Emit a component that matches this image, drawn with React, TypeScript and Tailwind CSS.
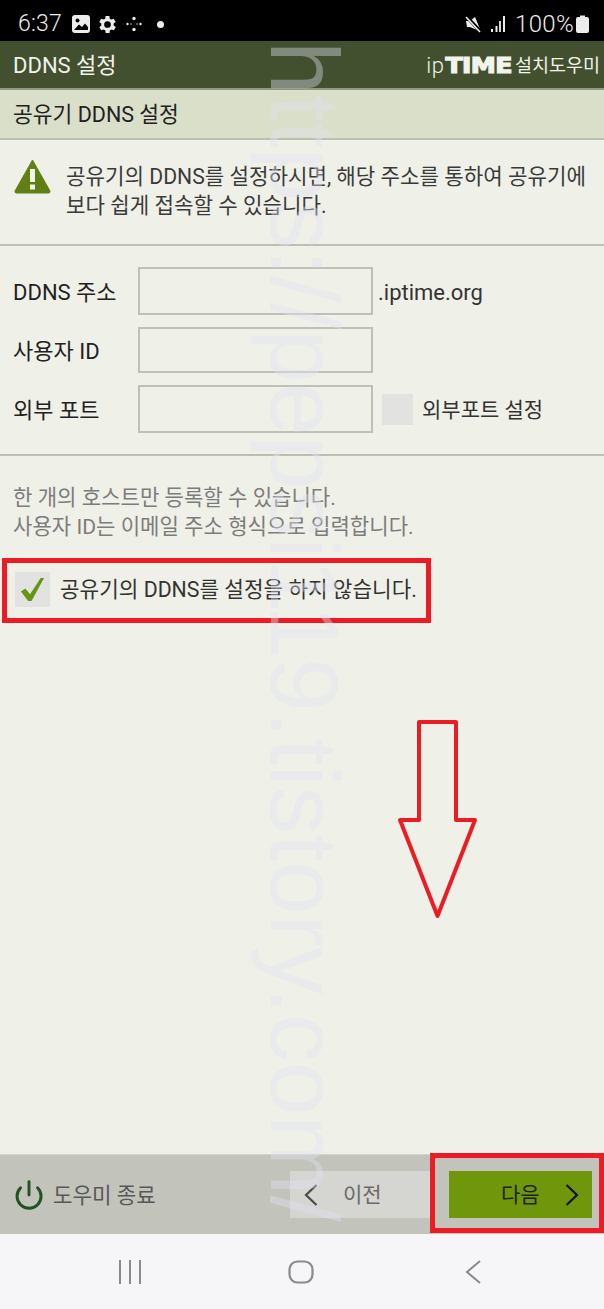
import { Power } from "lucide-react";

const FONT = "font-['Roboto','Noto_Sans_CJK_KR',sans-serif]";

function StatusBar() {
  return (
    <div className="flex h-[41px] shrink-0 items-end justify-between bg-black pb-[2px] pl-[18px] pr-[15px] text-[#ececec]">
      <div className="flex items-center">
        <span className="text-[23px] font-light leading-[30px] tracking-[0.2px]">6:37</span>
        {/* gallery */}
        <svg className="ml-[10px]" width="18" height="18" viewBox="0 0 18 18">
          <rect x="0" y="0" width="18" height="18" rx="3" fill="#ececec" />
          <circle cx="5.5" cy="5.5" r="2" fill="#000" />
          <path d="M2 15 L7 9.5 L10 12 L13 8.5 L16 12 V15 Z" fill="#000" />
        </svg>
        {/* settings */}
        <svg className="ml-[6px]" width="23" height="23" viewBox="0 0 24 24" fill="#ececec">
          <path d="M19.4 13a7.6 7.6 0 0 0 0-2l2.1-1.6-2-3.5-2.5 1a7.6 7.6 0 0 0-1.7-1L15 3.2h-4l-.4 2.7a7.6 7.6 0 0 0-1.700 1l-2.500-1-2 3.500L6.600 11a7.600 7.600 0 0 0 0 2l-2.100 1.600 2 3.500 2.500-1a7.600 7.600 0 0 0 1.700 1l.4 2.700h4l.4-2.700a7.600 7.600 0 0 0 1.700-1l2.500 1 2-3.500zM13 15.500a3.500 3.500 0 1 1 0-7 3.500 3.500 0 0 1 0 7z" transform="translate(-1 0)" />
        </svg>
        {/* dotted cluster */}
        <svg className="ml-[6px]" width="18" height="18" viewBox="0 0 18 18" fill="#ececec">
          <circle cx="9" cy="3.500" r="1.700" />
          <circle cx="9" cy="14.500" r="1.700" />
          <circle cx="2.500" cy="9" r="1.200" />
          <circle cx="15.500" cy="9" r="1.200" />
          <circle cx="6" cy="9" r="0.700" />
          <circle cx="12" cy="9" r="0.700" />
        </svg>
        <span className="ml-[14px] h-[7px] w-[7px] rounded-full bg-[#ececec]" />
      </div>
      <div className="flex items-center">
        {/* muted speaker */}
        <svg width="18" height="18" viewBox="0 0 18 18">
          <path d="M2 6 H6 L11 2 L16 14 L13 15 L6 12 H3 Z" fill="#ececec" />
          <path d="M2 1 L17 17" stroke="#000" strokeWidth="3.500" />
          <path d="M2 2 L16 17" stroke="#ececec" strokeWidth="1.600" />
        </svg>
        <svg className="ml-[9px]" width="15" height="18" viewBox="0 0 15 18" fill="#ececec">
          <rect x="0" y="14" width="2" height="3" />
          <rect x="4.500" y="11" width="2" height="6" />
          <rect x="8" y="6" width="2" height="11" opacity="0.900" />
          <rect x="12" y="1" width="2" height="16" />
        </svg>
        <span className="ml-[9px] text-[24px] font-light leading-[30px] tracking-[0.3px]">100%</span>
        <svg className="ml-[2px]" width="13" height="18" viewBox="0 0 13 18">
          <path d="M4 0.500 H9 V2 H11 Q13 2 13 4 V16 Q13 18 11 18 H2 Q0 18 0 16 V4 Q0 2 2 2 H4 Z" fill="#ececec" />
        </svg>
      </div>
    </div>
  );
}

function TitleBars() {
  return (
    <>
      <div className="flex h-[49px] shrink-0 items-center justify-between border-b-2 border-[#8f9a80] bg-[#42502f] pl-[13px] pr-[4px] pt-[3px] text-[#f2f3ea]">
        <span className="text-[22px] leading-none">DDNS 설정</span>
        <div className="flex items-center leading-none">
          <span className="text-[22px] font-light tracking-[0.500px]">ip</span>
          <span className="ml-[6px] mr-[9px] inline-block origin-center scale-x-[1.2] font-['DejaVu_Sans',sans-serif] text-[21px] font-bold tracking-[-0.500px] [-webkit-text-stroke:1.2px_#f2f3ea]">
            TIME
          </span>
          <span className="text-[18.500px]">설치도우미</span>
        </div>
      </div>
      <div className="flex h-[50px] shrink-0 items-center border-b-2 border-[#bcbfb2] bg-[#d9dfc8] pl-[13px] pt-[2px] text-[21.500px] text-[#222]">
        공유기 DDNS 설정
      </div>
    </>
  );
}

function Notice() {
  return (
    <div className="flex h-[106px] shrink-0 border-b-2 border-[#bcbfb2] pl-[14px] pt-[19px]">
      <svg className="shrink-0" width="37" height="35" viewBox="0 0 37 35">
        <path d="M18.500 1 L36 32 Q36.500 34 34.500 34 H2.500 Q0.500 34 1 32 Z" fill="#608016" stroke="#608016" strokeLinejoin="round" />
        <rect x="16" y="10" width="5" height="13" fill="#f2f3ea" />
        <rect x="16" y="25.500" width="5" height="5" fill="#f2f3ea" />
      </svg>
      <p className="ml-[15px] mt-[3px] text-[21.200px] leading-[29px] text-[#3a3a3a]">
        공유기의 DDNS를 설정하시면, 해당 주소를 통하여 공유기에
        <br />
        보다 쉽게 접속할 수 있습니다.
      </p>
    </div>
  );
}

function Field({ label, children }: { label: string; children?: React.ReactNode }) {
  return (
    <div className="flex items-center">
      <span className="w-[125px] shrink-0 pt-[3px] text-[22px] text-[#222]">{label}</span>
      <div className="h-full w-[235px] shrink-0 border-2 border-[#bfc1b8]" />
      {children}
    </div>
  );
}

function Form() {
  return (
    <div className="grid h-[210px] shrink-0 grid-rows-[48px_46px_48px] content-start gap-y-[12px] border-b-2 border-[#bcbfb2] pl-[13px] pt-[21px]">
      <Field label="DDNS 주소">
        <span className="ml-[5px] pt-[3px] text-[22px] text-[#333]">.iptime.org</span>
      </Field>
      <Field label="사용자 ID" />
      <Field label="외부 포트">
        <span className="ml-[9px] h-[31px] w-[31px] shrink-0 bg-[#e2e2e0]" />
        <span className="ml-[9px] pt-[3px] text-[21px] text-[#333]">외부포트 설정</span>
      </Field>
    </div>
  );
}

function Hints() {
  return (
    <div className="shrink-0 pl-[13px] pt-[27px] text-[21.100px] leading-[29px] text-[#7c7c7c]">
      <p>한 개의 호스트만 등록할 수 있습니다.</p>
      <p>사용자 ID는 이메일 주소 형식으로 입력합니다.</p>
    </div>
  );
}

function SkipOption() {
  return (
    <div className="mt-[31px] flex shrink-0 items-center pl-[15px]">
      <span className="flex h-[35px] w-[35px] items-center justify-center bg-[#e2e2e0]">
        <svg width="25" height="25" viewBox="0 0 26 26">
          <path d="M1 15 L5.500 12 L10.500 18 L21.500 1 L25 1 L12 25 L8.500 25 Z" fill="#659512" />
        </svg>
      </span>
      <span className="ml-[10px] text-[21.300px] text-[#333]">공유기의 DDNS를 설정을 하지 않습니다.</span>
    </div>
  );
}

function Footer() {
  return (
    <div className="flex h-[80px] shrink-0 items-center border-t border-[#d2d3cb] bg-[#c2c3bb] pr-[12px]">
      <Power className="ml-[13px] text-[#24521f]" size={32} strokeWidth={2.200} />
      <span className="ml-[8px] pt-[2px] text-[21.200px] text-[#585858]">도우미 종료</span>
      <div className="ml-auto flex h-[47px] w-[140px] items-center bg-[#d5d5d1]">
        <svg className="ml-[14px]" width="14" height="24" viewBox="0 0 14 24" fill="none" stroke="#4a4a4a" strokeWidth="2.200">
          <path d="M12.500 2 L2 12 L12.500 22" />
        </svg>
        <span className="ml-[25px] pt-[2px] text-[21px] text-[#6a6a6a]">이전</span>
      </div>
      <div className="ml-[19px] flex h-[47px] w-[143px] items-center bg-[#70970c]">
        <span className="ml-[52px] pt-[2px] text-[21px] text-[#1f1f1f]">다음</span>
        <svg className="ml-[25px]" width="14" height="24" viewBox="0 0 14 24" fill="none" stroke="#111" strokeWidth="2.200">
          <path d="M1.500 2 L12 12 L1.500 22" />
        </svg>
      </div>
    </div>
  );
}

function NavBar() {
  return (
    <div className="flex h-[75px] shrink-0 items-start bg-[#f6f6f8] pt-[26px]">
      <svg className="ml-[118px]" width="24" height="24" viewBox="0 0 24 24" stroke="#8a8a8a" strokeWidth="2">
        <path d="M2 0 V24 M12 0 V24 M22 0 V24" />
      </svg>
      <svg className="ml-[146px]" width="26" height="24" viewBox="0 0 26 24" fill="none" stroke="#8a8a8a" strokeWidth="2.200">
        <rect x="1.500" y="1.500" width="23" height="21" rx="8" />
      </svg>
      <svg className="ml-[151px]" width="16" height="24" viewBox="0 0 16 24" fill="none" stroke="#8a8a8a" strokeWidth="2">
        <path d="M15 1 L2 12 L15 23" />
      </svg>
    </div>
  );
}

export default function App() {
  return (
    <div className={`relative flex h-[1309px] w-[604px] flex-col overflow-hidden bg-[#eff0e7] ${FONT}`}>
      <StatusBar />
      <TitleBars />
      <Notice />
      <Form />
      <Hints />
      <SkipOption />
      <div className="flex-1" />
      <Footer />
      <NavBar />

      {/* annotations pasted over the capture */}
      <div className="absolute left-[2px] top-[558px] h-[65px] w-[429px] border-[5px] border-[#ed1c24]" />
      <div className="absolute left-[430px] top-[1153px] h-[80px] w-[174px] border-[5px] border-[#ed1c24]" />
      <svg className="absolute left-[396px] top-[718px]" width="84" height="204" viewBox="0 0 84 204" fill="none" stroke="#ed1c24" strokeWidth="4" strokeLinejoin="round">
        <path d="M23 4 H60 V102 H79 L41.500 198 L4 102 H23 Z" />
      </svg>

      {/* blog watermark */}
      <div className="pointer-events-none absolute left-[254px] top-[41px] whitespace-nowrap font-['Liberation_Sans',sans-serif] text-[96px] leading-[100px] text-[#e2e2f2]/40 [writing-mode:vertical-rl]">
        https://pepsi119.tistory.com/
      </div>
    </div>
  );
}
